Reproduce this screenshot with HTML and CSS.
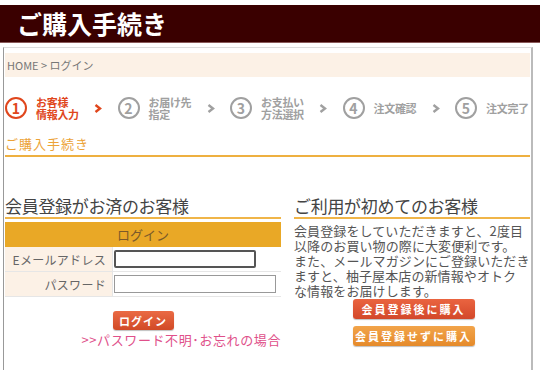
FILE: index.html
```html
<!DOCTYPE html>
<html lang="ja">
<head>
    <meta charset="UTF-8">
    <title>ご購入手続き</title>
    <link rel="stylesheet" href="styles.css">
</head>
<body>

<div class="title-bar">ご購入手続き</div>

<div class="page">
    <div class="crumb">HOME &gt; ログイン</div>

    <div class="steps">
        <div class="step active">
            <span class="num">1</span>
            <span class="label">お客様<br>情報入力</span>
            <svg class="arrow" width="8" height="9" viewBox="0 0 8 9"><polyline points="1.5,1 6,4.5 1.5,8" fill="none" stroke="currentColor" stroke-width="2.4"/></svg>
        </div>
        <div class="step">
            <span class="num">2</span>
            <span class="label">お届け先<br>指定</span>
            <svg class="arrow" width="8" height="9" viewBox="0 0 8 9"><polyline points="1.5,1 6,4.5 1.5,8" fill="none" stroke="currentColor" stroke-width="2.4"/></svg>
        </div>
        <div class="step">
            <span class="num">3</span>
            <span class="label">お支払い<br>方法選択</span>
            <svg class="arrow" width="8" height="9" viewBox="0 0 8 9"><polyline points="1.5,1 6,4.5 1.5,8" fill="none" stroke="currentColor" stroke-width="2.4"/></svg>
        </div>
        <div class="step">
            <span class="num">4</span>
            <span class="label">注文確認</span>
            <svg class="arrow" width="8" height="9" viewBox="0 0 8 9"><polyline points="1.5,1 6,4.5 1.5,8" fill="none" stroke="currentColor" stroke-width="2.4"/></svg>
        </div>
        <div class="step">
            <span class="num">5</span>
            <span class="label">注文完了</span>
        </div>
    </div>

    <div class="section-title">ご購入手続き</div>

    <div class="columns">
        <div class="col-left">
            <h2 class="col-head">会員登録がお済のお客様</h2>
            <table class="login-table">
                <tr><th colspan="2">ログイン</th></tr>
                <tr>
                    <td class="field-label">Eメールアドレス</td>
                    <td><input type="text" class="field email"></td>
                </tr>
                <tr>
                    <td class="field-label">パスワード</td>
                    <td><input type="password" class="field"></td>
                </tr>
            </table>
            <div class="login-actions">
                <button class="btn btn-login">ログイン</button>
                <a href="#" class="forgot">&gt;&gt;パスワード不明･お忘れの場合</a>
            </div>
        </div>

        <div class="col-right">
            <h2 class="col-head">ご利用が初めてのお客様</h2>
            <p class="intro">会員登録をしていただきますと、2度目<br>以降のお買い物の際に大変便利です。<br>また、メールマガジンにご登録いただき<br>ますと、柚子屋本店の新情報やオトク<br>な情報をお届けします。</p>
            <div class="reg-actions">
                <button class="btn btn-reg">会員登録後に購入</button>
                <button class="btn btn-guest">会員登録せずに購入</button>
            </div>
        </div>
    </div>
</div>

</body>
</html>
```

FILE: styles.css
```css
body, html {
    margin: 0;
    height: 100%;
    overflow: hidden;
    background-color: #fff;
    font-family: "Noto Sans CJK JP", "Noto Sans", sans-serif;
    color: #555;
}

.title-bar {
    margin-top: 5px;
    height: 38px;
    line-height: 36px;
    padding-left: 17px;
    background-color: #3a0000;
    border-bottom: 1px solid #8a5a5a;
    box-sizing: border-box;
    color: #fff;
    font-size: 25px;
    font-weight: bold;
}

.page {
    margin: 4px 7px 0 3px;
    height: 318px;
    padding: 5px 1px 0 1px;
    border-top: 1px solid #ddd;
    border-left: 1px solid #999;
    border-right: 2px solid #bbb;
}

.crumb {
    height: 24px;
    line-height: 24px;
    padding-left: 2px;
    background-color: #fcf1e6;
    color: #777;
    font-size: 11px;
}

.steps {
    display: flex;
    margin-top: 18px;
    height: 26px;
    overflow: hidden;
    white-space: nowrap;
}

.step {
    flex: 0 0 112.5px;
    display: flex;
    align-items: center;
    color: #a0a0a0;
}

.step.active {
    color: #e0461c;
}

.num {
    width: 18px;
    height: 18px;
    border: 2.5px solid currentColor;
    border-radius: 50%;
    display: flex;
    align-items: center;
    justify-content: center;
    font-size: 14px;
    font-weight: bold;
    line-height: 1;
}

.label {
    margin-left: 9px;
    font-size: 11px;
    font-weight: bold;
    line-height: 12px;
    width: 54px;
    letter-spacing: -0.3px;
}

.arrow {
    margin-left: 4px;
}

.section-title {
    margin-top: 14px;
    height: 20px;
    line-height: 18px;
    border-bottom: 2px solid #eeb040;
    color: #eca338;
    font-size: 13px;
    letter-spacing: 1px;
}

.columns {
    display: flex;
    margin-top: 39px;
}

.col-left {
    width: 276px;
}

.col-right {
    margin-left: 13px;
    flex: 1;
}

.col-head {
    margin: 0;
    height: 21px;
    line-height: 20px;
    border-bottom: 2px solid #f0b548;
    color: #444;
    font-size: 17px;
    font-weight: normal;
    letter-spacing: -0.3px;
}

.login-table {
    width: 100%;
    margin-top: 3px;
    border-collapse: collapse;
    font-size: 12px;
}

.login-table th {
    height: 23px;
    background-color: #e9a826;
    color: #7a5a2a;
    font-weight: normal;
    font-size: 13px;
}

.login-table td {
    height: 24px;
    padding: 0;
    border-bottom: 1px solid #e6e6e6;
}

.field-label {
    width: 101px;
    padding-right: 6px !important;
    text-align: right;
    white-space: nowrap;
    background-color: #fcf1e6;
    color: #666;
    border-right: 1px solid #e6e6e6;
    letter-spacing: 0.3px;
}

.field {
    display: block;
    width: 162px;
    height: 18px;
    margin-left: 1px;
    padding: 0;
    box-sizing: border-box;
    border: 1px solid #999;
}

.field.email {
    width: 142px;
    border: 2px solid #555;
    border-radius: 2px;
}

.login-actions {
    margin-top: 14px;
}

.btn {
    border: none;
    border-radius: 3px;
    color: #fff;
    font-family: inherit;
    font-weight: bold;
    font-size: 11px;
    cursor: pointer;
    box-shadow: 0 1px 1px rgba(0, 0, 0, 0.25);
}

.btn-login {
    display: block;
    width: 61px;
    height: 19px;
    margin: 0 auto;
    padding: 0;
    background: linear-gradient(#ea6a44, #d14a26);
    letter-spacing: 1px;
}

.forgot {
    display: block;
    margin-top: 1px;
    text-align: right;
    color: #e0508a;
    font-size: 13px;
    line-height: 18px;
    text-decoration: none;
    letter-spacing: 0.6px;
}

.intro {
    margin: 4px 0 0;
    font-size: 13px;
    line-height: 15px;
    color: #555;
    letter-spacing: 0.1px;
    white-space: nowrap;
}

.reg-actions {
    display: flex;
    flex-direction: column;
    align-items: center;
    gap: 7px;
    margin-top: 1px;
    margin-left: 3px;
}

.btn-reg, .btn-guest {
    width: 122px;
    height: 20px;
    padding: 0;
    letter-spacing: 2px;
}

.btn-reg {
    background: linear-gradient(#ea6440, #d3482a);
}

.btn-guest {
    background: linear-gradient(#f2a44a, #e58a2a);
}
```
